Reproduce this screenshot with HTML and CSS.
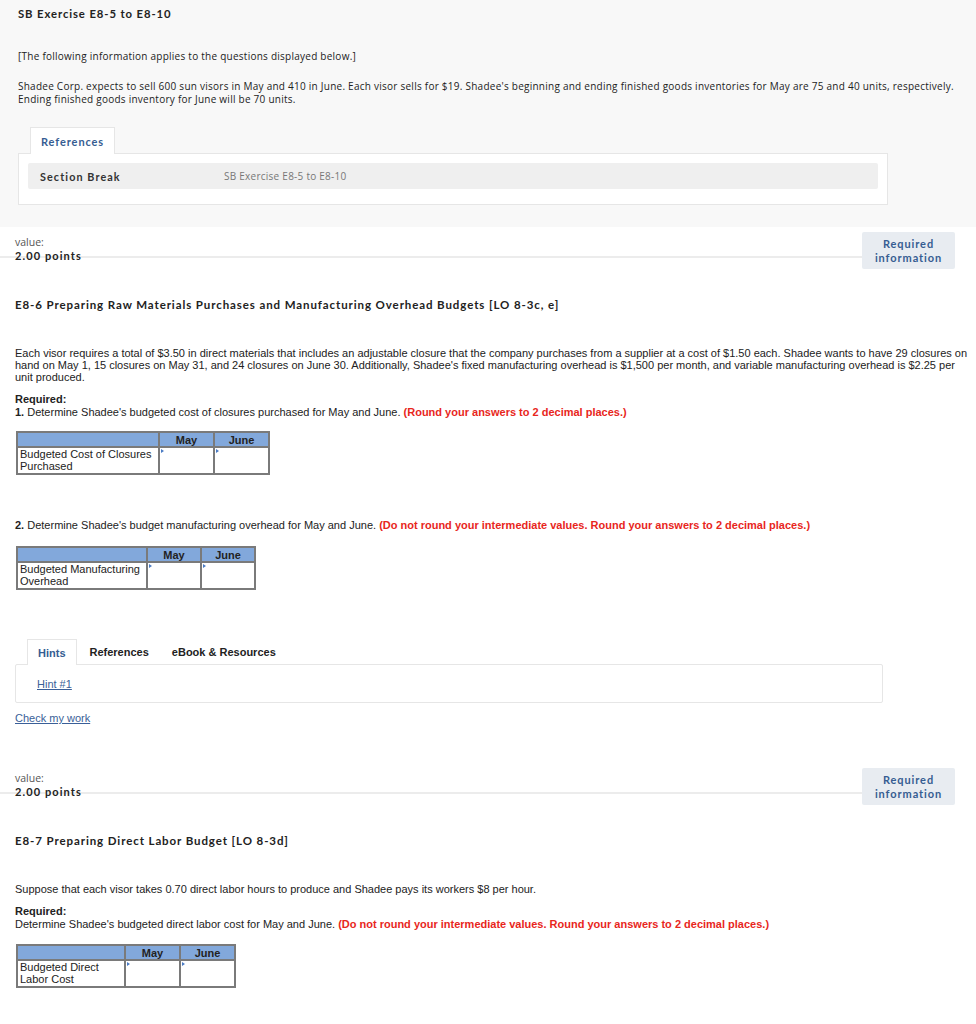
FILE: index.html
```html
<!DOCTYPE html>
<html lang="en">
<head>
<meta charset="utf-8">
<title>SB Exercise E8-5 to E8-10</title>
<link rel="stylesheet" href="styles.css">
</head>
<body>
<section class="intro">
  <h1 class="intro-title">SB Exercise E8-5 to E8-10</h1>
  <p class="intro-note">[The following information applies to the questions displayed below.]</p>
  <p class="intro-text">Shadee Corp. expects to sell 600 sun visors in May and 410 in June. Each visor sells for $19. Shadee's beginning and ending finished goods inventories for May are 75 and 40 units, respectively. Ending finished goods inventory for June will be 70 units.</p>
  <div class="ref-tabs">
    <div class="ref-tab">References</div>
  </div>
  <div class="ref-box">
    <div class="ref-bar">
      <span class="ref-bar-label">Section Break</span>
      <span class="ref-bar-value">SB Exercise E8-5 to E8-10</span>
    </div>
  </div>
</section>

<section class="question">
  <div class="q-head">
    <div class="q-value">
      <div class="q-value-label">value:</div>
      <div class="q-value-points">2.00 points</div>
    </div>
    <div class="req-btn">Required<br>information</div>
  </div>
  <h2 class="q-title">E8-6 Preparing Raw Materials Purchases and Manufacturing Overhead Budgets [LO 8-3c, e]</h2>
  <p class="q-text">Each visor requires a total of $3.50 in direct materials that includes an adjustable closure that the company purchases from a supplier at a cost of $1.50 each. Shadee wants to have 29 closures on hand on May 1, 15 closures on May 31, and 24 closures on June 30. Additionally, Shadee's fixed manufacturing overhead is $1,500 per month, and variable manufacturing overhead is $2.25 per unit produced.</p>
  <p class="q-req"><b>Required:</b><br><b>1.</b> Determine Shadee's budgeted cost of closures purchased for May and June. <span class="warn">(Round your answers to 2 decimal places.)</span></p>
  <table class="grid grid-1">
    <tr><th></th><th>May</th><th>June</th></tr>
    <tr><td class="lbl">Budgeted Cost of Closures Purchased</td><td class="in"></td><td class="in"></td></tr>
  </table>
  <p class="q-req q-req-2"><b>2.</b> Determine Shadee's budget manufacturing overhead for May and June. <span class="warn">(Do not round your intermediate values. Round your answers to 2 decimal places.)</span></p>
  <table class="grid grid-2">
    <tr><th></th><th>May</th><th>June</th></tr>
    <tr><td class="lbl">Budgeted Manufacturing Overhead</td><td class="in"></td><td class="in"></td></tr>
  </table>

  <div class="hint-tabs">
    <div class="hint-tab active">Hints</div>
    <div class="hint-tab">References</div>
    <div class="hint-tab">eBook &amp; Resources</div>
  </div>
  <div class="hint-box"><a class="link" href="#">Hint #1</a></div>
  <a class="link check" href="#">Check my work</a>
</section>

<section class="question question-2">
  <div class="q-head">
    <div class="q-value">
      <div class="q-value-label">value:</div>
      <div class="q-value-points">2.00 points</div>
    </div>
    <div class="req-btn">Required<br>information</div>
  </div>
  <h2 class="q-title">E8-7 Preparing Direct Labor Budget [LO 8-3d]</h2>
  <p class="q-text q-text-2">Suppose that each visor takes 0.70 direct labor hours to produce and Shadee pays its workers $8 per hour.</p>
  <p class="q-req"><b>Required:</b><br>Determine Shadee's budgeted direct labor cost for May and June. <span class="warn">(Do not round your intermediate values. Round your answers to 2 decimal places.)</span></p>
  <table class="grid grid-3">
    <tr><th></th><th>May</th><th>June</th></tr>
    <tr><td class="lbl">Budgeted Direct Labor Cost</td><td class="in"></td><td class="in"></td></tr>
  </table>
</section>
</body>
</html>
```
FILE: styles.css
```css
html, body {
  margin: 0;
  padding: 0;
  background: #ffffff;
  color: #222;
  font-family: "Lato", "Open Sans", sans-serif;
}

.intro {
  background: #f8f8f8;
  padding: 7px 0 22px 18px;
}

.intro-title {
  margin: 0;
  font-size: 11.3px;
  line-height: 14px;
  font-weight: 700;
  letter-spacing: 0.9px;
  color: #222;
}

.intro-note {
  margin: 29px 0 0;
  font-family: "Open Sans", "Lato", sans-serif;
  font-size: 10px;
  letter-spacing: 0.25px;
  line-height: 13px;
  color: #222;
}

.intro-text {
  margin: 17px 0 0;
  font-family: "Open Sans", "Lato", sans-serif;
  font-size: 10px;
  letter-spacing: 0.25px;
  line-height: 13px;
  color: #222;
  width: 945px;
}

.ref-tabs {
  display: flex;
  margin: 20px 0 0 12px;
}

.ref-tab {
  background: #fff;
  border: 1px solid #e6e6e6;
  border-bottom: none;
  height: 26px;
  padding: 0 10px;
  display: flex;
  align-items: center;
  font-size: 11px;
  font-weight: 700;
  letter-spacing: 0.9px;
  color: #365d92;
  position: relative;
  top: 1px;
}

.ref-box {
  width: 850px;
  background: #fff;
  border: 1px solid #e6e6e6;
  padding: 9px 9px 15px;
}

.ref-bar {
  background: #efefef;
  border-radius: 2px;
  height: 26px;
  display: flex;
  align-items: center;
  padding-left: 12px;
  font-size: 10px;
}

.ref-bar-label {
  width: 184px;
  font-size: 10.8px;
  font-weight: 700;
  letter-spacing: 1.1px;
  color: #333;
}

.ref-bar-value {
  font-family: "Open Sans", "Lato", sans-serif;
  font-size: 10px;
  letter-spacing: 0.25px;
  color: #777;
}

.question {
  padding: 5px 0 0 15px;
}

.q-head {
  display: flex;
  justify-content: space-between;
  width: 940px;
  margin-left: -15px;
  padding-left: 15px;
  background: linear-gradient(#ececec, #ececec) no-repeat 0 24px / 973px 2px;
}

.q-value {
  padding-top: 4px;
}

.q-value-label {
  font-family: "Open Sans", "Lato", sans-serif;
  font-size: 10.5px;
  line-height: 13px;
  color: #555;
}

.q-value-points {
  font-size: 11px;
  line-height: 13px;
  font-weight: 700;
  letter-spacing: 1.1px;
  color: #222;
}

.req-btn {
  background: #e8ecf1;
  border-radius: 2px;
  width: 93px;
  height: 37px;
  display: flex;
  align-items: center;
  justify-content: center;
  text-align: center;
  font-size: 11px;
  line-height: 13.5px;
  font-weight: 700;
  letter-spacing: 0.9px;
  color: #365d92;
}

.q-title {
  margin: 29px 0 0;
  font-size: 11.5px;
  line-height: 14px;
  font-weight: 700;
  letter-spacing: 0.9px;
  color: #222;
}

.q-text {
  margin: 35px 0 0;
  font-family: "Liberation Sans", Arial, sans-serif;
  font-size: 11px;
  line-height: 12px;
  color: #222;
  width: 960px;
}

.q-text-2 {
  margin-top: 35px;
}

.q-req {
  margin: 10px 0 0;
  font-family: "Liberation Sans", Arial, sans-serif;
  font-size: 11px;
  line-height: 13px;
  color: #222;
}

.q-req-2 {
  margin-top: 44px;
}

.warn {
  color: #e8261c;
  font-weight: 700;
}

.grid {
  margin: 12px 0 0 1px;
  border-collapse: collapse;
  font-family: "Liberation Sans", Arial, sans-serif;
  font-size: 11px;
  color: #222;
}

.grid th,
.grid td {
  border: 2px solid #7a7a7a;
  padding: 0;
}

.grid th {
  background: #82a8db;
  height: 13px;
  line-height: 12px;
  font-weight: 700;
  text-align: center;
}

.grid td {
  height: 25px;
  vertical-align: top;
}

.grid .lbl {
  padding: 0 2px;
  line-height: 12px;
}

.grid .in {
  position: relative;
  width: 53px;
}

.grid .in::before {
  content: "";
  position: absolute;
  left: 1px;
  top: 1px;
  border-left: 3px solid #4a7bc4;
  border-top: 2px solid transparent;
  border-bottom: 2px solid transparent;
}

.grid-1 .lbl { width: 136px; }
.grid-2 { margin-top: 14px; }
.grid-2 .lbl { width: 124px; }
.grid-2 .in { width: 52px; }
.grid-3 .lbl { width: 102px; }

.hint-tabs {
  display: flex;
  margin: 48px 0 0 12px;
  font-family: "Liberation Sans", Arial, sans-serif;
  font-size: 11px;
  font-weight: 700;
}

.hint-tab {
  height: 25px;
  display: flex;
  align-items: center;
  padding: 0 10px;
  color: #222;
  border: 1px solid transparent;
  border-bottom: none;
}

.hint-tab.active {
  color: #365d92;
  background: #fff;
  border-color: #e6e6e6;
  position: relative;
  top: 1px;
}

.hint-tab + .hint-tab {
  padding: 0 9px 0 12px;
}

.hint-box {
  width: 845px;
  height: 37px;
  border: 1px solid #e6e6e6;
  border-radius: 2px;
  padding-left: 21px;
  display: flex;
  align-items: center;
  font-family: "Liberation Sans", Arial, sans-serif;
  font-size: 11px;
}

.link {
  color: #3a5f98;
  text-decoration: underline;
  font-family: "Liberation Sans", Arial, sans-serif;
  font-size: 11px;
}

.check {
  display: block;
  margin-top: 9px;
  line-height: 13px;
}

.question-2 {
  padding-top: 43px;
}

.grid-3 {
  margin-top: 13px;
}
```
